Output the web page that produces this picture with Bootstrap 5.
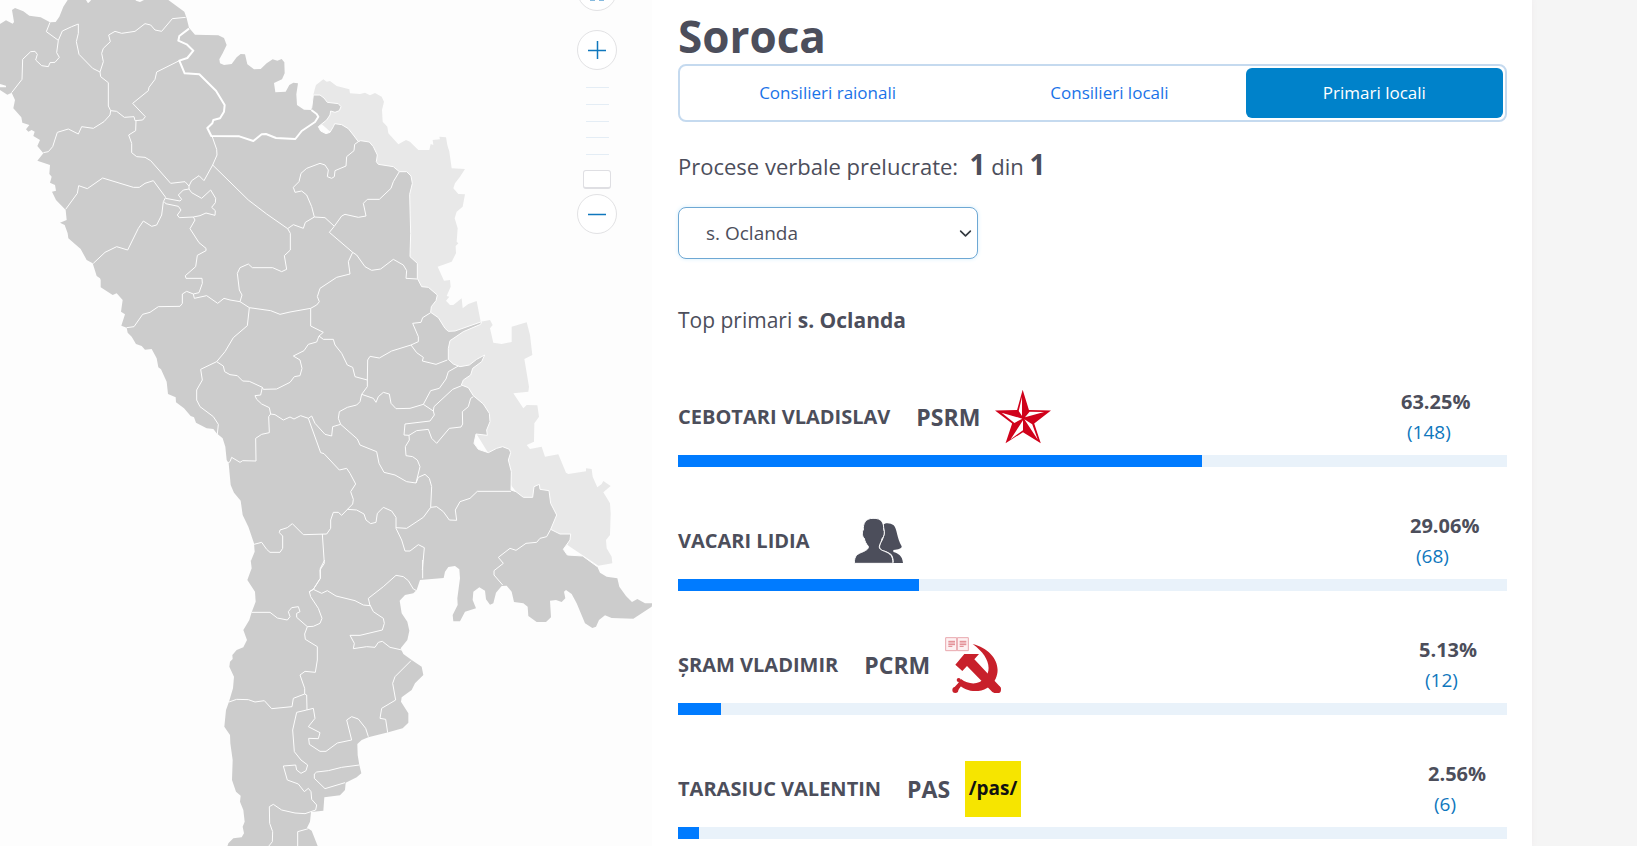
<!DOCTYPE html>
<html lang="ro">
<head>
<meta charset="utf-8">
<meta name="viewport" content="width=device-width, initial-scale=1">
<title>Soroca – Primari locali</title>
<link rel="stylesheet" href="https://cdn.jsdelivr.net/npm/bootstrap@5.3.0/dist/css/bootstrap.min.css">
<style>
  :root { --ink: #4c4e5b; --brand: #0082ca; }
  body { font-family: "Open Sans", "Noto Sans", sans-serif; color: var(--ink); background: #f5f5f5; overflow: hidden; }
  .shell { display: grid; grid-template-columns: 652fr 880fr 105fr; height: 100vh; }
  .map-pane { background: #fdfdfd; overflow: hidden; }
  .map-pane > svg { display: block; width: 100%; height: auto; }
  .land { fill: #ccc; stroke: none; }
  .left-bank { fill: #e8e8e8; }
  .border-line { fill: none; stroke: #fdfdfd; stroke-width: 3; stroke-linejoin: round; }
  .border-bold { stroke-width: 6; stroke: #fff; }
  .zoom-box { position: absolute; top: -29px; right: 35px; width: 40px; }
  .zoom-btn { width: 40px; height: 40px; border: 1px solid #e2e2e4; border-radius: 50%; background: #fff; padding: 0; }
  .zoom-btn svg { display: block; margin: auto; }
  .zoom-in { margin: 19px 0 17px; }
  .zoom-scale { height: 68px; width: 23px; margin-bottom: 15px; }
  .zoom-scale span { height: 1px; background: #e4edf5; }
  .zoom-handle { width: 28px; height: 19px; margin-bottom: 5px; border: 1px solid #dfdfe3; border-bottom-width: 2px; border-radius: 3px; background: #fff; }
  .panel { background: #fff; padding: 8px 25px 0 26px; overflow: hidden; box-shadow: 0 0 6px #efebed; }
  h1 { font-size: 44px; line-height: 56px; font-weight: 700; margin: 0; }
  .tabs { border: 2px solid #c5daef; border-radius: 8px; padding: 2px; }
  .tabs .nav-link { font-size: 17px; line-height: 26px; padding: 12px 16px; color: #1a73e8; border-radius: 6px; }
  .tabs .nav-link.active { background: var(--brand); color: #fff; }
  .summary { font-size: 22px; line-height: 36px; margin: 24px 0 23px; }
  .summary b { font-size: 28px; line-height: 36px; }
  .place-select { width: 300px; height: 52px; border: 1px solid #6ea8d4; border-radius: 8px; font-size: 19px; color: var(--ink); padding: 0 30px 0 27px; background-position: right 5px center; background-size: 13px 13px; box-shadow: 0 0 4px #d5edfb; }
  .subtitle { font-size: 21px; line-height: 32px; margin: 45px 0 50px; font-weight: 400; }
  .result { margin-bottom: 43px; }
  .result-head { height: 62px; margin-bottom: 7px; }
  .person { font-size: 20px; font-weight: 700; margin-right: 26px; white-space: nowrap; }
  .party { font-size: 23px; font-weight: 700; margin-right: 15px; white-space: nowrap; }
  .emblem { width: 56px; height: 56px; flex: none; }
  .score { width: calc(106px - 9px * var(--rank)); line-height: 30px; font-size: 20px; }
  .score a { font-size: 19px; color: #0f77bd; text-decoration: none; padding-left: 6px; }
  .result .progress { height: 12px; border-radius: 0; background: #e9f2fa; }
  .result .progress-bar { background: #007bff; }
</style>
</head>
<body>
<div class="shell">
  <section class="map-pane position-relative" aria-label="Harta">
    <svg id="map" viewBox="0 0 1956 2538" role="img" aria-label="Harta raioanelor"></svg>
    <div class="zoom-box d-flex flex-column align-items-center">
      <button class="zoom-btn" aria-label="Acasă"><svg width="18" height="20" viewBox="0 0 18 20" fill="none" stroke="#0f77bd"><path d="M1 9 9 1l8 8M2 8v11h5v-7h4v7h5V8"/></svg></button>
      <button class="zoom-btn zoom-in" aria-label="Mărește"><svg width="18" height="18" viewBox="0 0 18 18" stroke="#0f77bd" stroke-width="1.5"><path d="M0 9.500h18M9.500 0v18"/></svg></button>
      <div class="zoom-scale d-flex flex-column justify-content-between"><span></span><span></span><span></span><span></span><span></span></div>
      <div class="zoom-handle"></div>
      <button class="zoom-btn" aria-label="Micșorează"><svg width="18" height="18" viewBox="0 0 18 18" stroke="#0f77bd" stroke-width="1.500"><path d="M0 9.500h18"/></svg></button>
    </div>
  </section>

  <main class="panel">
    <h1>Soroca</h1>
    <nav class="nav nav-fill tabs">
      <a class="nav-link" href="#raionali">Consilieri raionali</a>
      <a class="nav-link" href="#locali">Consilieri locali</a>
      <a class="nav-link active" aria-current="page" href="#primari">Primari locali</a>
    </nav>
    <p class="summary">Procese verbale prelucrate:&nbsp; <b>1</b> din <b>1</b></p>
    <select class="form-select place-select" aria-label="Localitatea"><option>s. Oclanda</option></select>
    <h2 class="subtitle">Top primari <b>s. Oclanda</b></h2>

    <article class="result" style="--rank:0">
      <div class="result-head d-flex align-items-center">
        <span class="person">CEBOTARI VLADISLAV</span><span class="party">PSRM</span>
        <svg class="emblem" viewBox="14 14 170 170" aria-hidden="true">
          <path fill="#d0021b" d="M98 16 117 78 184 79 133 119 153 179 99 145 46 179 66 119 14 79 81 78Z"/>
          <path fill="#fff" d="M96 38V96L86 81ZM97 104 73 117 34 86ZM99 109V139L61 167ZM103 106 127 121 144 168ZM105 100 119 83 163 84Z"/>
        </svg>
        <div class="score ms-auto d-flex flex-column"><b>63.25%</b><a href="#voturi">(148)</a></div>
      </div>
      <div class="progress"><div class="progress-bar" style="width:63.25%"></div></div>
    </article>

    <article class="result" style="--rank:1">
      <div class="result-head d-flex align-items-center">
        <span class="person">VACARI LIDIA</span><span class="party"></span>
        <svg class="emblem" viewBox="570 432 168 168" aria-hidden="true" fill="#4c4e5b">
          <path d="M668 466C674 460 690 462 698 469 708 478 708 510 722 532 723 539 712 542 697 543V549C712 553 724 560 726 582H694L698 579C698 556 688 551 666 544 655 539 656 532 660 522 668 510 671 500 671 490 672 478 666 476 668 466Z"/>
          <path stroke="#fff" stroke-width="3" d="M580 583C580 560 588 555 607 548 617 543 623 540 622 532 615 525 611 515 610 508 604 506 602 487 607 483 606 465 612 448 636 448 662 447 669 462 668 482 672 488 670 503 663 509 662 518 656 524 655 532 654 540 660 543 671 547 690 555 695 560 696 583Z"/>
        </svg>
        <div class="score ms-auto d-flex flex-column"><b>29.06%</b><a href="#voturi">(68)</a></div>
      </div>
      <div class="progress"><div class="progress-bar" style="width:29.06%"></div></div>
    </article>

    <article class="result" style="--rank:2">
      <div class="result-head d-flex align-items-center">
        <span class="person">ŞRAM VLADIMIR</span><span class="party">PCRM</span>
        <svg class="emblem" viewBox="18 20 168 168" aria-hidden="true">
          <path fill="#fdf1f2" stroke="#e9a8ae" stroke-width="3" d="M20 22H53V61H20ZM55 22H88V61H55Z"/>
          <path stroke="#df8189" stroke-width="3" d="M28 33H48M28 38H48M28 43H48M28 48H40M62 33H82M62 38H82M62 43H82M62 48H74"/>
          <g fill="#c8202b">
            <path d="M101 41C156 54 190 101 170 145 149 189 88 194 57 160L66 146C90 164 120 164 138 143 162 112 144 72 101 41Z"/>
            <path d="M76 71H120L106 87 184 170C190 184 172 194 160 185L84 107 70 122 49 103Z"/>
            <circle cx="175" cy="178" r="11"/><circle cx="49" cy="179" r="9"/>
            <path d="M60 145 75 155 54 184 42 175 60 156Z"/><circle cx="59" cy="149" r="6"/>
          </g>
        </svg>
        <div class="score ms-auto d-flex flex-column"><b>5.13%</b><a href="#voturi">(12)</a></div>
      </div>
      <div class="progress"><div class="progress-bar" style="width:5.13%"></div></div>
    </article>

    <article class="result" style="--rank:3">
      <div class="result-head d-flex align-items-center">
        <span class="person">TARASIUC VALENTIN</span><span class="party">PAS</span>
        <svg class="emblem" viewBox="0 0 56 56" aria-hidden="true">
          <rect width="56" height="56" fill="#f6e500"/>
          <text x="28" y="34" text-anchor="middle" font-family="Open Sans, Noto Sans, sans-serif" font-weight="700" font-size="19" fill="#111">/pas/</text>
        </svg>
        <div class="score ms-auto d-flex flex-column"><b>2.56%</b><a href="#voturi">(6)</a></div>
      </div>
      <div class="progress"><div class="progress-bar" style="width:2.56%"></div></div>
    </article>
  </main>
</div>

<script>
  // Map data is kept in five sheets; each entry is [sheet, "x,y x,y ..."].
  const origin = { nw: [0, 0], ne: [930, 0], w: [0, 840], e: [930, 840], s: [600, 1680] };

  const leftBank = [
    ["ne", "10,285 15,265 18,255 40,238 50,245 60,243 80,258 118,268 120,280 150,282 165,278 180,286 195,279 215,290 222,305 216,330 218,365 232,380 235,400 265,433 288,420 300,425 325,450 358,450 362,432 370,435 368,420 390,418 388,410 408,412 412,435 418,455 425,505 465,507 450,530 435,550 430,565 445,582 465,583 458,620 440,635 434,655 443,685 440,725 445,730 437,738 438,760 425,785 383,800 402,842 420,840"],
    ["e", "422,20 410,48 418,50 408,62 420,75 430,75 455,55 458,85 475,72 500,63 512,125 540,120 548,135 540,145 550,188 575,192 605,186 605,140 650,127 660,165 667,225 643,237 657,320 655,335 610,340 640,385 650,375 682,376 687,410 673,430 672,485 650,495 660,507 695,500 705,530 745,523 768,578 775,582 828,574 828,565 845,567 848,590 862,622 875,612 880,603 902,618 880,637 900,670 902,700 900,765 888,780 890,805 905,830 907,850 865,857 780,800 700,740 560,560 400,300 300,100"],
    ["ne", "250,600 100,430 10,350"]
  ];

  const mainland = [
    ["nw", "0,72 18,61 38,71 42,66 36,30 45,24 70,34 88,47 122,52 150,67 167,66 178,50 190,20 203,0 203,-9 258,-9 258,0 264,10 272,2 275,-9 400,-9 408,2 420,6 432,0 432,-9 505,-9 505,0 553,35 560,55 567,83 585,104 655,106 672,114 680,135 668,160 658,178 660,190 672,195 695,192 710,172 722,162 735,163 742,193 762,208 782,207 800,190 818,178 832,182 845,177 853,187 854,220 846,238 822,249 826,277 857,275 868,255 880,248 894,250 889,283 891,315 912,329 934,330"],
    ["ne", "5,325 10,285 30,285 42,294 52,307 85,311 93,320 88,332 75,337 62,333 60,345 50,360 25,380 32,393 48,401 60,397 70,380 74,371 95,374 115,386 130,405 145,425 152,422 178,426 190,440 202,465 199,485 205,493 250,500 268,515 290,515 303,528 307,550 299,583 302,700 300,770 322,790 322,835"],
    ["e", "335,20 355,22 382,45 378,62 364,80 362,97 385,113 405,145 415,154 435,153 515,125 512,133 460,155 435,172 420,182 415,205 415,238 430,252 450,260 478,255 500,238 524,225 515,245 488,265 482,285 460,300 454,315 475,323 490,347 520,372 538,400 540,425 530,450 532,466 498,462 492,490 505,508 535,518 560,505 578,500 598,508 602,518 595,540 604,575 603,630 618,635 640,652 668,652 672,620 688,613 690,628 717,632 722,670 740,705 722,748 750,762 782,762 780,780 760,808 772,825 818,828 862,860"],
    ["s", "1200,38 1220,50 1252,55 1258,80 1278,108 1296,126 1312,117 1335,130 1357,130 1355,140 1300,176 1235,174 1215,166 1197,180 1188,200 1177,204 1155,190 1130,130 1115,102 1098,90 1092,95 1096,115 1085,126 1068,120 1050,122 1053,172 1038,186 1010,186 985,168 983,140 970,130 942,126 935,95 920,77 905,78 888,98 880,130 870,134 858,118 855,92 838,82 820,95 818,120 828,145 795,155 780,184 760,184 758,165 773,135 772,115 780,55 778,28 765,18 745,21 735,35 731,54 660,60 650,90 640,100 615,105 599,122 605,160 622,185 628,212 622,240 602,265 610,282 635,300 665,320 670,345 645,370 635,390 605,412 603,425 625,460 625,488 608,505 565,517 505,532 485,540 472,552 473,585 478,615 484,640 470,652 437,668 435,690 420,706 373,712 370,752 333,756 330,785 321,803 335,812 353,858 360,880 75,880 85,850 100,835 125,832 132,820 128,800 134,785 130,750 120,725 122,707 108,695 96,660 98,600 91,550 90,525 73,500 78,450 87,425 99,385 102,350 88,320 90,305 98,297 97,285 110,270 130,262 141,240 130,210 148,180 155,157 167,125 165,95 142,60 155,25 152,0"],
    ["w", "753,842 764,815 762,790 745,740 728,705 722,662 702,638 692,615 686,550 680,540 676,500 668,475 650,460 640,447 620,445 588,428 582,412 572,408 552,385 528,367 527,352 504,342 500,305 483,268 475,262 470,235 455,207 435,209 425,198 408,192 395,170 383,158 380,143 364,137 375,103 363,95 368,60 350,40 338,45 302,22"],
    ["nw", "302,840 300,835 290,828 278,790 260,780 242,747 205,715 203,700 194,675 180,668 200,660 197,630 168,600 156,575 168,572 165,555 150,548 155,530 148,522 150,495 112,482 130,460 112,438 120,420 100,408 104,395 95,390 85,395 78,388 88,375 67,368 64,352 40,325 45,300 35,278 22,284 0,270 0,262 18,262 18,257 0,252"]
  ];

  const boldBorder = [
    ["nw", "567,86 538,108 535,122 560,133 580,152 562,174 538,182 554,220 598,223 648,272 674,315 672,335 660,355 640,360 637,370 622,384 634,408 718,409 760,423 785,403 798,402 828,414 886,417 905,393 945,366 955,350 950,342 934,330"]
  ];

  const borders = {
    nw: [
      "150,67 139,95 175,121",
      "35,278 66,238 68,178 92,155 105,154 112,163 107,180 125,197 145,200 150,188 165,187 178,172 170,158 175,121 187,93 215,80 235,72 235,100 229,125 237,163 278,205 300,216",
      "300,216 310,185 305,160 310,145 331,125 326,105 345,94 365,100 405,94 435,71 452,75 465,90 485,94 517,56 557,52",
      "300,216 302,230 325,248 325,318 332,332 350,334 373,352 402,350 405,362 428,360 436,350 398,310 445,272 447,262 465,238 470,216 538,182",
      "332,332 330,345 312,365 280,385 245,380 235,402 205,387 172,397 158,440 145,455 130,458",
      "408,362 407,392 386,405 395,430 395,458 410,470 435,472 452,482 512,550 555,545 567,558 575,542 597,527 612,542 638,495 651,465 650,448 636,408",
      "197,628 232,580 236,557 262,566 308,534 400,562 418,562 435,550 460,542 497,592 490,605 485,645 470,675 455,679 430,663 415,685 383,750 350,740 315,757 280,790",
      "497,595 540,603 545,598 535,585 550,570 567,567 567,558",
      "567,567 575,578 605,595 632,570 647,595 646,608 635,622 646,632 645,646 618,639 600,647 580,651 538,653 532,645 543,630 535,619 497,611 493,605",
      "580,651 585,660 570,686 597,728 618,745 618,752 592,766 587,800 556,827 558,835 606,835 607,850 597,878 580,882",
      "638,495 745,600 800,642 863,686 871,700 871,750 853,767 860,808 845,815 818,803 757,803 745,792 720,803 712,820 718,870 726,885 720,905",
      "863,686 880,674 910,685 916,667 943,651 975,653 1002,678",
      "943,651 935,620 920,585 905,573 885,577 880,562 897,545 903,520 920,505 960,490 975,495 985,510 982,530 995,535 1003,530 1005,512 1038,498 1040,470 1062,452 1064,433 1075,425"
    ],
    ne: [
      "72,680 95,648 105,643 145,652 168,648 160,610 172,598 208,598 243,565 250,545 268,515",
      "72,680 58,697 128,757 140,765 165,800 185,811 212,807 250,778 280,795 290,812 288,835 322,837",
      "128,757 115,785 120,822 80,832 30,865 22,890 28,905 20,915 2,925"
    ],
    w: [
      "380,143 402,140 428,103 450,97 475,80 540,79 547,70 547,42 560,34 580,42 583,55 620,47 653,70 672,55 690,60 720,65 748,83 812,92 840,103 870,96 932,85",
      "748,83 742,137 700,173 675,215 650,245 602,268 607,300 590,330 590,360 600,380 640,410 655,433 652,462",
      "650,245 670,258 674,275 690,284 712,287 728,303 748,304 787,322 790,328 830,327 870,307 883,290 900,287 906,265 900,240 880,228 912,212 925,193 950,186 957,168 970,157 932,138 932,85",
      "787,322 782,345 765,347 770,358 785,372 808,383 812,402 806,410 808,458 785,463 767,475 768,543 728,542 720,547 695,532 690,545 683,550",
      "812,402 825,404 850,420 870,411 882,417 902,407 925,415 935,408 945,430 975,463 995,468 998,440 1022,433",
      "925,415 962,518 972,521 1018,570 1040,565 1050,580 1067,612 1052,635 1060,658 1058,672 1025,706 1015,697 1000,697 992,720 992,745 980,762 910,764 877,731 862,743 840,750 838,758 848,768 848,805 840,817 810,817 800,808 785,787 762,793",
      "967,762 973,850 960,870 961,895 940,928 928,935 932,950 955,985 966,1015 960,1030 940,1039 922,1040 890,1012 890,1000 900,995 895,980 875,983 865,995 870,1010 862,1020 832,1014 810,997 755,997"
    ],
    e: [
      "27,168 40,178 70,178 75,195 95,220 112,255 128,262 135,290 172,300 172,320 155,343 150,365 140,375 112,382 88,395 85,415 92,433 142,477 150,495 200,515 207,550 222,577 255,585 290,605 318,609 330,560 322,540 308,530 288,527 286,500 298,480 297,466 282,465 285,432 360,423 373,405 370,393 340,373",
      "172,300 173,240 180,229 208,234 245,213 303,195 325,185 325,170 308,130 333,127 338,113 362,98",
      "303,195 320,218 340,232 337,243 378,253 412,240",
      "155,343 190,355 198,367 205,350 220,337 238,342 243,370 258,386 300,385 340,373 362,332 388,325 408,297 415,275 445,258",
      "370,393 372,380 428,328 455,317",
      "297,466 320,452 355,448 365,475 380,490 418,445 453,441 458,432 457,395 475,380 482,355 490,350",
      "112,688 140,690 162,702 168,720 182,731 198,727 202,700 220,682 245,693 258,712 258,745 275,780 285,813 300,813 325,794 343,803 337,870",
      "258,743 290,745 340,712 362,682 365,620 358,595 345,583 325,592 318,609",
      "362,682 380,680 400,695 418,720 440,721 436,690 450,665 480,655 502,634 603,634",
      "722,748 710,770 690,775 680,787 648,790 618,811 600,805 565,832 580,850 552,872 552,885 578,915"
    ],
    s: [
      "340,88 328,95",
      "322,200 314,222 316,238 352,260 352,300 346,337 315,334 300,345 314,385 314,402 280,415 276,440 215,446 193,422 165,426 145,419 110,418 87,426",
      "340,88 365,100 382,92 408,108 465,122 490,135 510,137 505,115 550,80 588,46 610,50 625,62 640,87 650,92",
      "510,135 520,155 550,175 553,190 547,210 480,226 450,226 463,250 460,266 500,260 525,262 535,247 547,244 570,262 606,270",
      "374,0 361,25 361,55 340,88", "668,0 668,55",
      "633,302 585,350 578,370 587,420 545,445 540,475 557,478 563,518",
      "505,530 497,505 475,477 455,470 440,480 455,540 412,549 378,574 360,574 328,553 326,535 355,536 360,518 325,500 345,475 340,445 320,450 290,457 278,510 283,575 303,600 323,615 318,632 303,640 290,630 287,615 250,618 262,660 295,672 313,695 325,685 333,695 335,718 350,735 347,750 315,761 285,759 245,750 220,733 208,740 209,790 218,815 217,845 205,860",
      "314,402 320,405 321,450",
      "478,615 425,622 385,632 350,636 343,642 343,655 375,686 435,668",
      "293,860 293,815 325,806"
    ]
  };

  const move = (sheet, pts) => pts.split(" ").map(p => {
    const [x, y] = p.split(",").map(Number);
    return (x + origin[sheet][0]) + "," + (y + origin[sheet][1]);
  }).join(" ");
  const shape = (cls, parts, close) =>
    `<path class="${cls}" d="M${parts.map(([s, p]) => move(s, p)).join(" ")}${close ? "Z" : ""}"/>`;

  let out = shape("left-bank", leftBank, true) + shape("land", mainland, true);
  // White seam between the mainland and the left bank.
  out += shape("border-line", [mainland[1], mainland[2]], false);
  for (const [sheet, list] of Object.entries(borders))
    for (const line of list) out += shape("border-line", [[sheet, line]], false);
  out += shape("border-line border-bold", boldBorder, false);
  document.getElementById("map").innerHTML = out;
</script>
<script src="https://cdn.jsdelivr.net/npm/bootstrap@5.3.0/dist/js/bootstrap.bundle.min.js"></script>
</body>
</html>
